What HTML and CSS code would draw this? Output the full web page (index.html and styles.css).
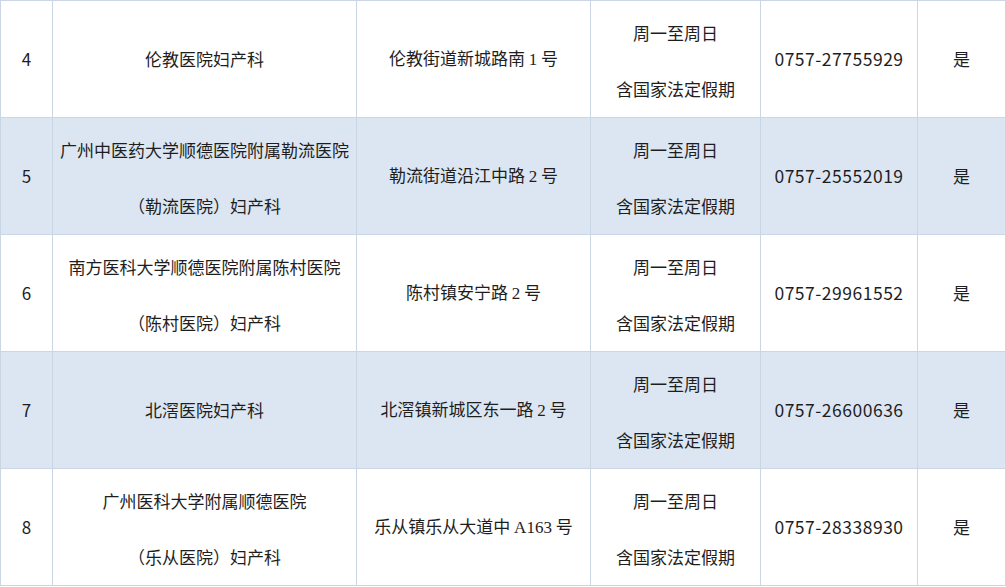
FILE: index.html
```html
<!DOCTYPE html>
<html lang="zh-CN">
<head>
<meta charset="utf-8">
<link rel="stylesheet" href="styles.css">
</head>
<body>
<div class="grid">
  <div class="c">4</div>
  <div class="c">伦教医院妇产科</div>
  <div class="c">伦教街道新城路南 <span class="serif">1</span> 号</div>
  <div class="c two"><span>周一至周日</span><span>含国家法定假期</span></div>
  <div class="c tel">0757-27755929</div>
  <div class="c">是</div>

  <div class="c alt">5</div>
  <div class="c alt two"><span>广州中医药大学顺德医院附属勒流医院</span><span>（勒流医院）妇产科</span></div>
  <div class="c alt">勒流街道沿江中路 <span class="serif">2</span> 号</div>
  <div class="c alt two"><span>周一至周日</span><span>含国家法定假期</span></div>
  <div class="c alt tel">0757-25552019</div>
  <div class="c alt">是</div>

  <div class="c">6</div>
  <div class="c two"><span>南方医科大学顺德医院附属陈村医院</span><span>（陈村医院）妇产科</span></div>
  <div class="c">陈村镇安宁路 <span class="serif">2</span> 号</div>
  <div class="c two"><span>周一至周日</span><span>含国家法定假期</span></div>
  <div class="c tel">0757-29961552</div>
  <div class="c">是</div>

  <div class="c alt">7</div>
  <div class="c alt">北滘医院妇产科</div>
  <div class="c alt">北滘镇新城区东一路 <span class="serif">2</span> 号</div>
  <div class="c alt two"><span>周一至周日</span><span>含国家法定假期</span></div>
  <div class="c alt tel">0757-26600636</div>
  <div class="c alt">是</div>

  <div class="c">8</div>
  <div class="c two"><span>广州医科大学附属顺德医院</span><span>（乐从医院）妇产科</span></div>
  <div class="c">乐从镇乐从大道中 <span class="serif">A163</span> 号</div>
  <div class="c two"><span>周一至周日</span><span>含国家法定假期</span></div>
  <div class="c tel">0757-28338930</div>
  <div class="c">是</div>
</div>
</body>
</html>
```
FILE: styles.css
```css
html, body {
  margin: 0;
  padding: 0;
  background: #ffffff;
}
body {
  font-family: "Noto Sans CJK SC", "Noto Sans", sans-serif;
  font-size: 17px;
  color: #1e1e1e;
}
.grid {
  display: grid;
  grid-template-columns: 52px 304px 234px 170px 157px 88px;
  grid-auto-rows: 117px;
  border-top: 1px solid #cbd6e4;
  border-left: 1px solid #cbd6e4;
  width: 1005px;
}
.c {
  box-sizing: border-box;
  border-right: 1px solid #cbd6e4;
  border-bottom: 1px solid #cbd6e4;
  display: flex;
  flex-direction: column;
  align-items: center;
  justify-content: center;
  text-align: center;
  line-height: 24px;
  white-space: nowrap;
}
.alt {
  background: #dce6f2;
}
.two {
  gap: 32px;
  padding-top: 3px;
}
.tel {
  font-size: 17.5px;
  letter-spacing: 0.5px;
}
.serif {
  font-family: "Liberation Serif", serif;
  display: contents;
}
```
